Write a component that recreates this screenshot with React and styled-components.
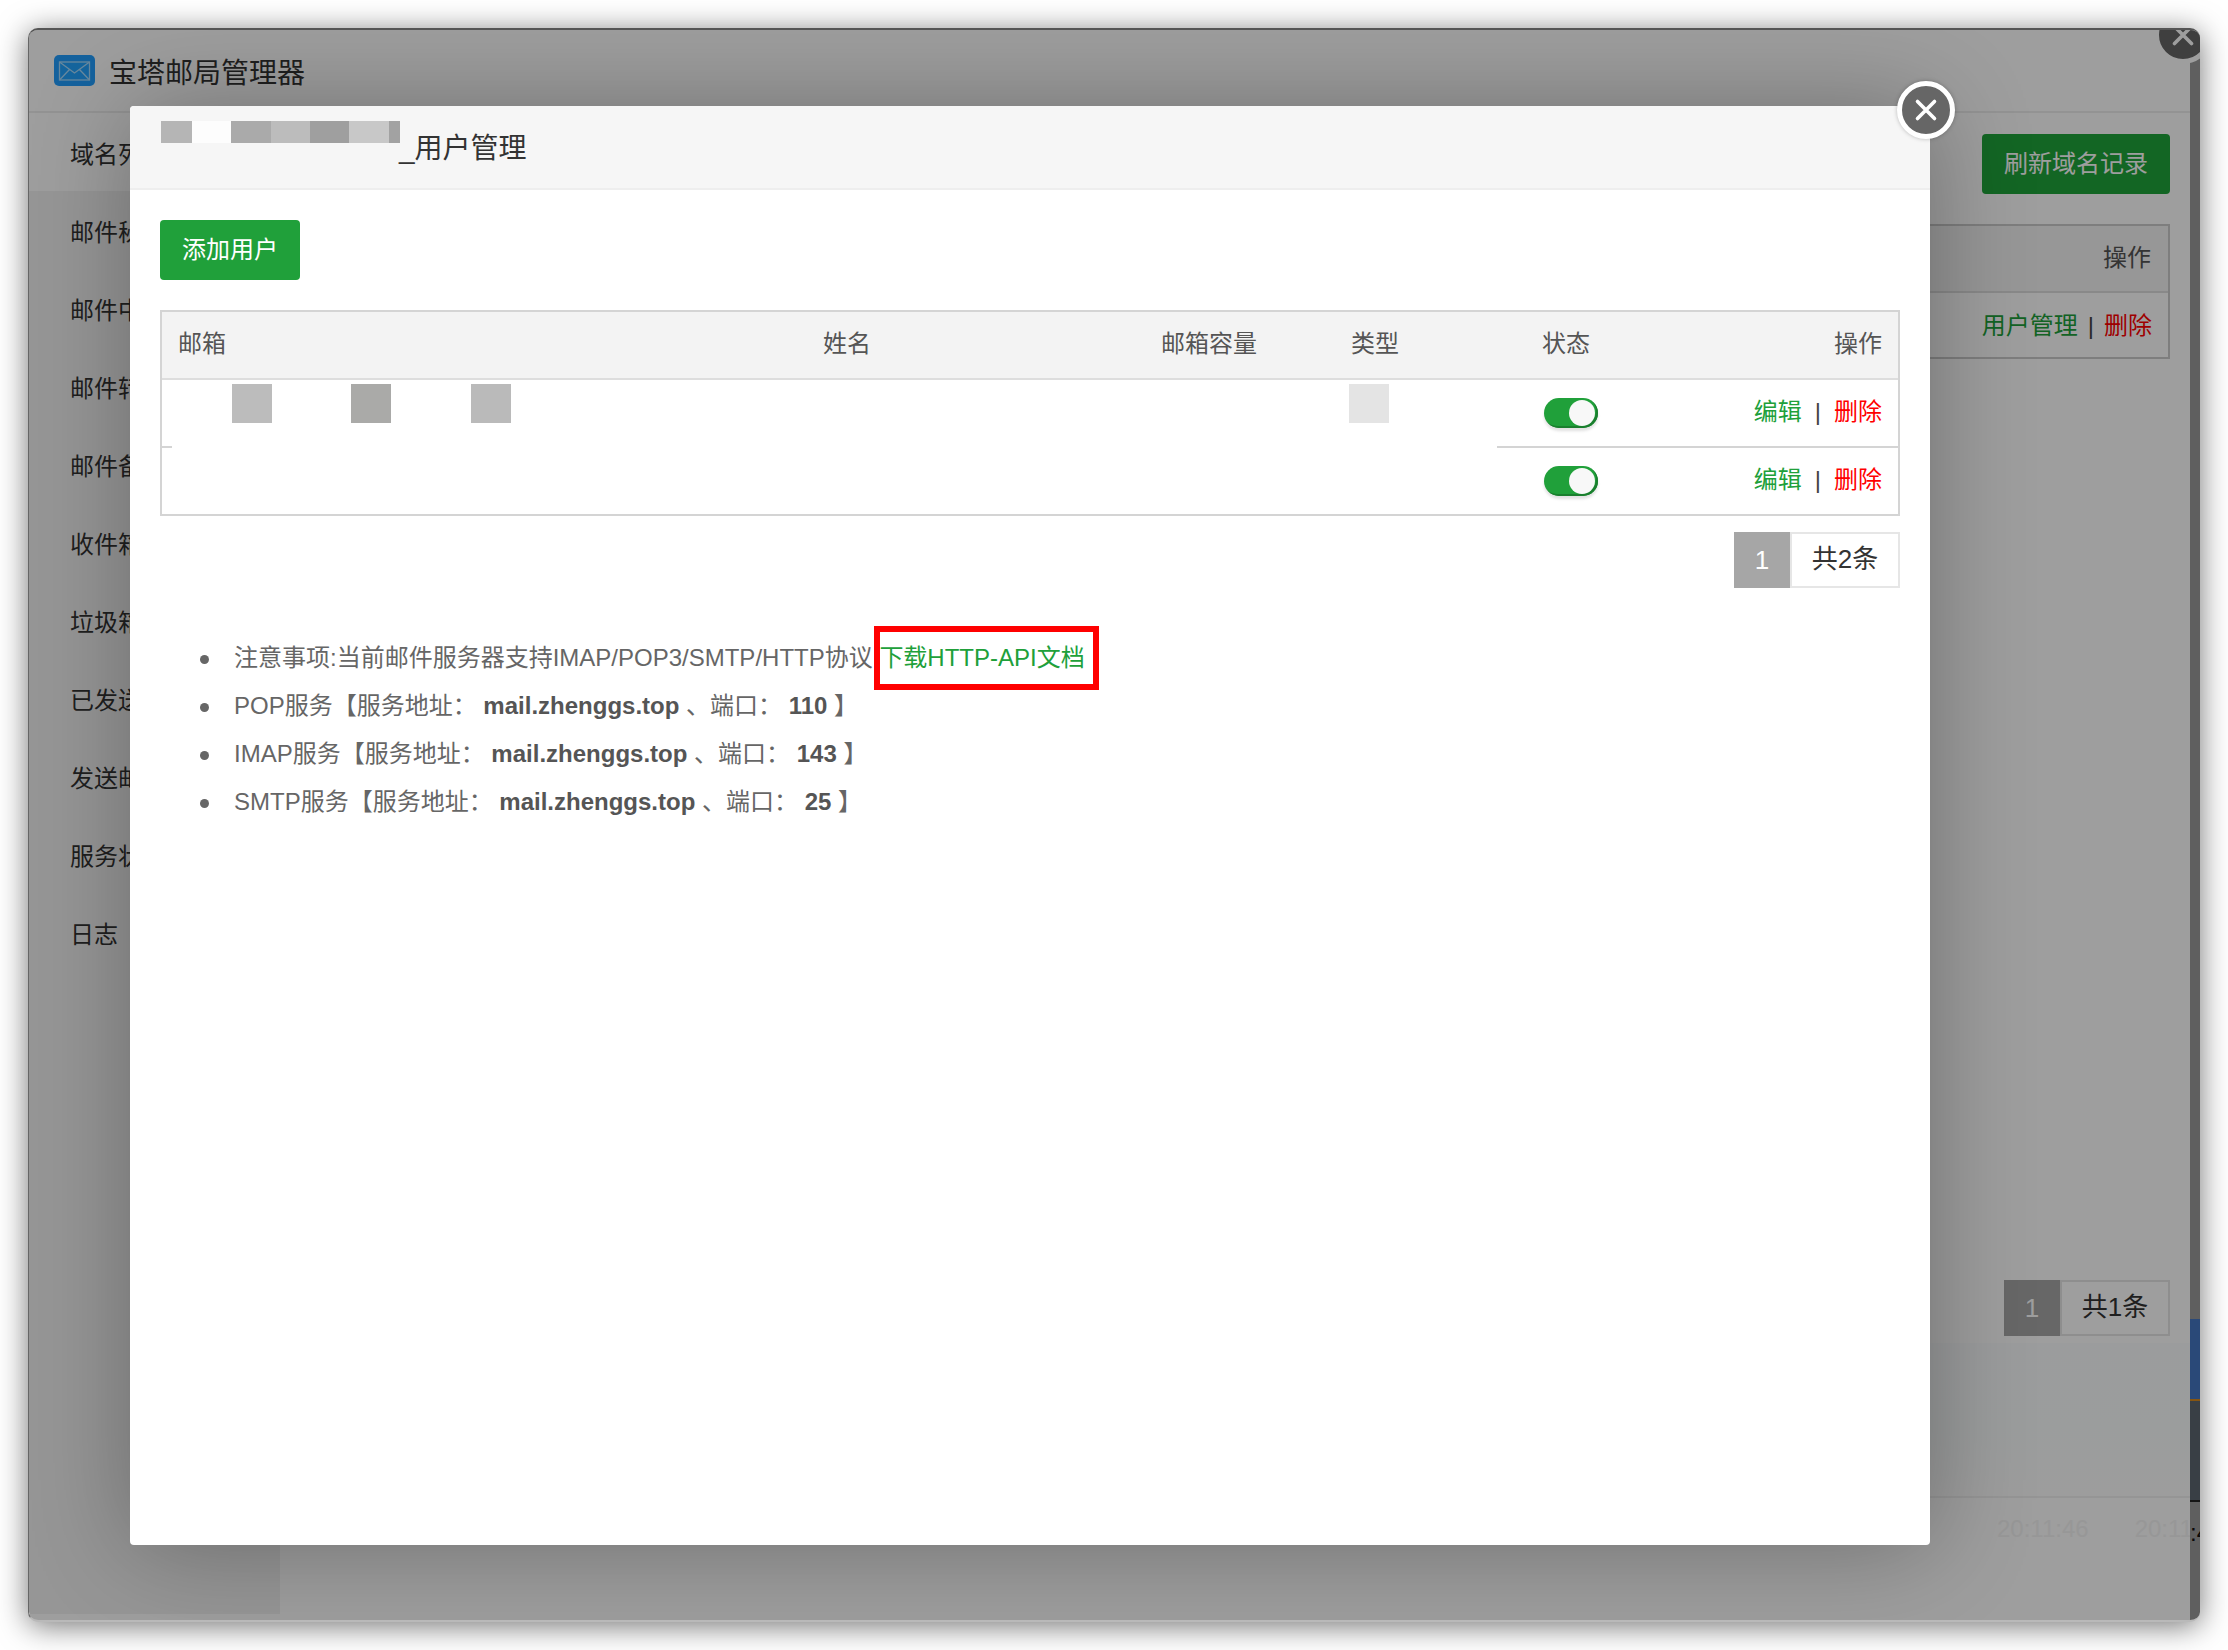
import styled, { createGlobalStyle } from 'styled-components'

const GlobalStyle = createGlobalStyle`
  html, body {
    margin: 0;
    padding: 0;
    background: #fff;
    font-family: "Liberation Sans", "Noto Sans CJK SC", sans-serif;
    color: #333;
  }
  * { box-sizing: border-box; }
`

const menu = ['域名列表', '邮件秘钥', '邮件中继', '邮件转发', '邮件备份', '收件箱', '垃圾箱', '已发送', '发送邮件', '服务状态', '日志']

const columns = ['邮箱', '姓名', '邮箱容量', '类型', '状态', '操作']

const services = [
  { name: 'POP', port: '110' },
  { name: 'IMAP', port: '143' },
  { name: 'SMTP', port: '25' },
]

const titleBlocks = [
  { w: 31, c: '#b5b5b5' },
  { w: 39, c: '#fdfdfd' },
  { w: 40, c: '#aaaaaa' },
  { w: 39, c: '#bcbcbc' },
  { w: 39, c: '#9f9f9f' },
  { w: 40, c: '#c8c8c8' },
  { w: 11, c: '#a2a2a2' },
]

const CloseIcon = () => (
  <svg width="24" height="24" viewBox="0 0 24 24">
    <path d="M3.5 3.5 L20.5 20.5 M20.5 3.5 L3.5 20.5" stroke="#fff" strokeWidth="3.6" strokeLinecap="round" />
  </svg>
)

const MailLogo = () => (
  <svg width="41" height="31" viewBox="0 0 41 31">
    <rect width="41" height="31" rx="5" fill="#229fff" />
    <rect x="5.5" y="7" width="30" height="18" fill="#22a4ff" stroke="#a8dcff" strokeWidth="1.3" />
    <path d="M5.5 7 L20.5 18 L35.5 7 M5.5 25 L15.5 14.5 M35.5 25 L25.5 14.5" fill="none" stroke="#a8dcff" strokeWidth="1.3" />
  </svg>
)

const Actions = ({ gap, children, danger = '删除' }) => (
  <ActionGroup $gap={gap}>
    <ActionLink>{children}</ActionLink>
    <Pipe>|</Pipe>
    <DangerLink>{danger}</DangerLink>
  </ActionGroup>
)

const Pager = ({ total }) => (
  <PagerRow>
    <PagerCurrent>1</PagerCurrent>
    <PagerTotal>共{total}条</PagerTotal>
  </PagerRow>
)

const UserRow = ({ children }) => (
  <BodyRow>
    {children}
    <StatusCell>
      <Toggle><ToggleKnob /></Toggle>
    </StatusCell>
    <OpsCell><Actions gap={13}>编辑</Actions></OpsCell>
  </BodyRow>
)

const App = () => (
  <>
    <GlobalStyle />
    <Page>
      <Window>
        <WindowColumn>
          <TitleBar>
            <MailLogo />
            <AppName>宝塔邮局管理器</AppName>
          </TitleBar>
          <WindowBody>
            <Sidebar>
              {menu.map((item, i) => (
                <MenuItem key={item} $active={i === 0}>{item}</MenuItem>
              ))}
            </Sidebar>
            <Main>
              <Toolbar>
                <RefreshButton>刷新域名记录</RefreshButton>
              </Toolbar>
              <DomainTable>
                <DomainHead>操作</DomainHead>
                <DomainRow><Actions gap={10}>用户管理</Actions></DomainRow>
              </DomainTable>
              <MainPager><Pager total={1} /></MainPager>
              <ChartArea />
              <ChartAxis>
                <AxisLabel>20:11:46</AxisLabel>
                <AxisLabel>20:11:46</AxisLabel>
              </ChartAxis>
            </Main>
          </WindowBody>
        </WindowColumn>
        <Strip>
          <StripPart $h={1289} $c="#999" />
          <StripPart $h={80} $c="#4577c2" />
          <StripPart $h={2} $c="#d98a1e" />
          <StripPart $h={99} $c="#5d6770" />
          <StripPart $h={2} $c="#222" />
          <StripText>:4</StripText>
        </Strip>
        <WindowClose><CloseIcon /></WindowClose>
        <Shade />
        <Modal>
          <ModalClose><CloseIcon /></ModalClose>
          <ModalHeader>
            <TitleMask>
              {titleBlocks.map((b, i) => (
                <MaskBlock key={i} $w={b.w} $c={b.c} />
              ))}
            </TitleMask>
            <ModalTitle>_用户管理</ModalTitle>
          </ModalHeader>
          <ModalBody>
            <AddButton>添加用户</AddButton>
            <UserTable>
              <HeadRow>
                {columns.map((c) => (
                  <HeadCell key={c} $right={c === '操作'}>{c}</HeadCell>
                ))}
              </HeadRow>
              <UserRow>
                <MaskCell>
                  <MaskSquare $c="#bcbcbc" />
                  <MaskSquare $c="#aaaaa8" />
                  <MaskSquare $c="#bababa" />
                </MaskCell>
                <span />
                <span />
                <TypeCell><MaskSquare $c="#e4e4e4" /></TypeCell>
              </UserRow>
              <RowDivider>
                <DividerStub />
                <DividerLine />
              </RowDivider>
              <UserRow>
                <span />
                <span />
                <span />
                <span />
              </UserRow>
            </UserTable>
            <Pager total={2} />
            <NoteList>
              <NoteItem>
                注意事项:当前邮件服务器支持IMAP/POP3/SMTP/HTTP协议 <DocLink>下载HTTP-API文档</DocLink>
              </NoteItem>
              {services.map((s) => (
                <NoteItem key={s.name}>
                  {s.name}服务【服务地址： <b>mail.zhenggs.top</b> 、端口： <b>{s.port}</b> 】
                </NoteItem>
              ))}
            </NoteList>
          </ModalBody>
        </Modal>
      </Window>
    </Page>
  </>
)

const Page = styled.div`
  height: 1650px;
  padding: 28px;
  overflow: hidden;
`

const Window = styled.div`
  position: relative;
  display: flex;
  width: 2172px;
  height: 1594px;
  background: #fff;
  border-top: 2px solid #555;
  border-left: 1px solid #666;
  border-bottom: 2px solid #b9b9b9;
  border-radius: 10px;
  overflow: hidden;
  box-shadow: 0 4px 30px rgba(0, 0, 0, 0.55);
`

const WindowColumn = styled.div`
  flex: 1;
  min-width: 0;
  display: flex;
  flex-direction: column;
`

const TitleBar = styled.div`
  height: 83px;
  flex: none;
  display: flex;
  align-items: center;
  gap: 14px;
  padding: 0 0 0 25px;
  border-bottom: 2px solid #eee;
`

const AppName = styled.div`
  padding-top: 6px;
  font-size: 28px;
  line-height: 40px;
  color: #333;
`

const WindowBody = styled.div`
  flex: 1;
  min-height: 0;
  display: flex;
`

const Sidebar = styled.div`
  width: 251px;
  flex: none;
  margin-bottom: 6px;
  background: #f3f3f3;
`

const MenuItem = styled.div`
  height: 78px;
  display: flex;
  align-items: center;
  padding: 0 0 0 41px;
  font-size: 24px;
  color: #333;
  background: ${(p) => (p.$active ? '#fff' : 'transparent')};
`

const Main = styled.div`
  flex: 1;
  min-width: 0;
  padding: 21px 20px 0 0;
  overflow: hidden;
`

const Toolbar = styled.div`
  display: flex;
  justify-content: flex-end;
`

const RefreshButton = styled.div`
  width: 188px;
  height: 60px;
  background: #20a53a;
  border-radius: 4px;
  color: #fff;
  font-size: 24px;
  line-height: 60px;
  text-align: center;
`

const DomainTable = styled.div`
  margin-top: 30px;
  border: 2px solid #ccc;
`

const DomainHead = styled.div`
  height: 67px;
  padding-right: 17px;
  background: #f4f4f4;
  border-bottom: 2px solid #ddd;
  font-size: 24px;
  line-height: 64px;
  text-align: right;
  color: #555;
`

const DomainRow = styled.div`
  height: 64px;
  padding: 2px 16px 0 0;
  display: flex;
  justify-content: flex-end;
  align-items: center;
`

const ActionGroup = styled.div`
  display: flex;
  align-items: center;
  gap: ${(p) => p.$gap}px;
  font-size: 24px;
  line-height: 32px;
`

const ActionLink = styled.span`
  color: #20a03a;
`

const DangerLink = styled.span`
  color: #f00;
`

const Pipe = styled.span`
  color: #444;
`

const MainPager = styled.div`
  margin-top: 921px;
`

const PagerRow = styled.div`
  display: flex;
  justify-content: flex-end;
  height: 56px;
`

const PagerCurrent = styled.div`
  width: 56px;
  background: #a6a6a6;
  color: #fff;
  font-size: 26px;
  line-height: 56px;
  text-align: center;
`

const PagerTotal = styled.div`
  width: 110px;
  border: 2px solid #e6e6e6;
  color: #333;
  font-size: 26px;
  line-height: 50px;
  text-align: center;
`

const ChartArea = styled.div`
  height: 155px;
  margin: 7px -20px 0 0;
  background: linear-gradient(180deg, #fafcfe 0%, #fbfdfd 55%, #fdfefe 100%);
  border-bottom: 2px solid #f0f0f0;
`

const ChartAxis = styled.div`
  display: flex;
  gap: 46px;
  padding: 18px 0 0 1717px;
`

const AxisLabel = styled.span`
  font-size: 24px;
  line-height: 26px;
  color: #f4f4f4;
  white-space: nowrap;
`

const Strip = styled.div`
  width: 10px;
  flex: none;
  display: flex;
  flex-direction: column;
  background: #999;
`

const StripPart = styled.div`
  height: ${(p) => p.$h}px;
  flex: none;
  background: ${(p) => p.$c};
`

const StripText = styled.div`
  margin-top: 18px;
  font-size: 24px;
  line-height: 26px;
  color: #111;
  white-space: nowrap;
  overflow: hidden;
`

const WindowClose = styled.div`
  position: absolute;
  top: -24px;
  right: -12px;
  width: 58px;
  height: 58px;
  border: 5px solid #fff;
  border-radius: 50%;
  background: #666;
  display: flex;
  align-items: center;
  justify-content: center;
`

const Shade = styled.div`
  position: absolute;
  inset: 0;
  background: rgba(0, 0, 0, 0.38);
`

const Modal = styled.div`
  position: absolute;
  left: 101px;
  top: 76px;
  width: 1800px;
  height: 1439px;
  background: #fff;
  border-radius: 4px;
  box-shadow: 2px 2px 100px rgba(0, 0, 0, 0.3);
`

const ModalClose = styled.div`
  position: absolute;
  top: -25px;
  right: -25px;
  width: 58px;
  height: 58px;
  border: 5px solid #fff;
  border-radius: 50%;
  background: #666;
  display: flex;
  align-items: center;
  justify-content: center;
  box-shadow: 0 0 4px rgba(0, 0, 0, 0.25);
`

const ModalHeader = styled.div`
  height: 84px;
  display: flex;
  align-items: center;
  padding-left: 31px;
  background: #f6f6f6;
  border-bottom: 2px solid #eee;
  border-radius: 4px 4px 0 0;
`

const TitleMask = styled.div`
  display: flex;
  align-self: flex-start;
  margin-top: 15px;
`

const MaskBlock = styled.div`
  width: ${(p) => p.$w}px;
  height: 22px;
  background: ${(p) => p.$c};
`

const ModalTitle = styled.div`
  margin-left: -1px;
  padding-top: 4px;
  font-size: 28px;
  line-height: 40px;
  color: #333;
`

const ModalBody = styled.div`
  padding: 30px;
`

const AddButton = styled.div`
  width: 140px;
  height: 60px;
  background: #20a03a;
  border-radius: 4px;
  color: #fff;
  font-size: 24px;
  line-height: 60px;
  text-align: center;
`

const UserTable = styled.div`
  margin: 30px 0 16px;
  border: 2px solid #d4d4d4;
`

const gridColumns = '645px 338px 190px 191px 150px 1fr'

const HeadRow = styled.div`
  display: grid;
  grid-template-columns: ${gridColumns};
  height: 68px;
  padding-bottom: 2px;
  background: #f3f3f3;
  border-bottom: 2px solid #ddd;
  align-items: center;
`

const HeadCell = styled.div`
  padding: 0 16px;
  font-size: 24px;
  line-height: 32px;
  color: #555;
  text-align: ${(p) => (p.$right ? 'right' : 'left')};
`

const BodyRow = styled.div`
  display: grid;
  grid-template-columns: ${gridColumns};
  height: 66px;
  align-items: center;
`

const MaskCell = styled.div`
  display: flex;
  gap: 79.5px;
  align-self: start;
  padding: 4px 0 0 69.5px;
`

const TypeCell = styled.div`
  align-self: start;
  padding: 4px 0 0 14px;
`

const MaskSquare = styled.div`
  width: 40px;
  height: 39px;
  background: ${(p) => p.$c};
`

const StatusCell = styled.div`
  padding-left: 18px;
`

const Toggle = styled.div`
  position: relative;
  width: 54px;
  height: 30px;
  border-radius: 15px;
  background: #20a03a;
  box-shadow: inset -2px -2px 0 #1a7f2e, 0 3px 3px rgba(0, 0, 0, 0.12);
`

const ToggleKnob = styled.div`
  position: absolute;
  top: 2px;
  right: 3px;
  width: 26px;
  height: 26px;
  border-radius: 50%;
  background: #f8f8f8;
`

const OpsCell = styled.div`
  display: flex;
  justify-content: flex-end;
  padding: 0 16px 3px 0;
`

const RowDivider = styled.div`
  display: flex;
  justify-content: space-between;
  height: 2px;
`

const DividerStub = styled.div`
  width: 10px;
  background: #d4d4d4;
`

const DividerLine = styled.div`
  width: 401px;
  background: #d4d4d4;
`

const NoteList = styled.ul`
  margin: 46px 0 0;
  padding: 0 0 0 74px;
  list-style: none;
  font-size: 24px;
  line-height: 48px;
  color: #666;

  b {
    color: #555;
    font-weight: 700;
  }
`

const NoteItem = styled.li`
  position: relative;
  white-space: nowrap;

  &::before {
    content: '';
    position: absolute;
    left: -34px;
    top: 21px;
    width: 9px;
    height: 9px;
    border-radius: 50%;
    background: #666;
  }
`

const DocLink = styled.span`
  position: relative;
  display: inline-block;
  color: #20a03a;

  &::after {
    content: '';
    position: absolute;
    top: -8px;
    bottom: -8px;
    left: -5px;
    right: -14px;
    border: 6px solid #f00;
  }
`

export default App
